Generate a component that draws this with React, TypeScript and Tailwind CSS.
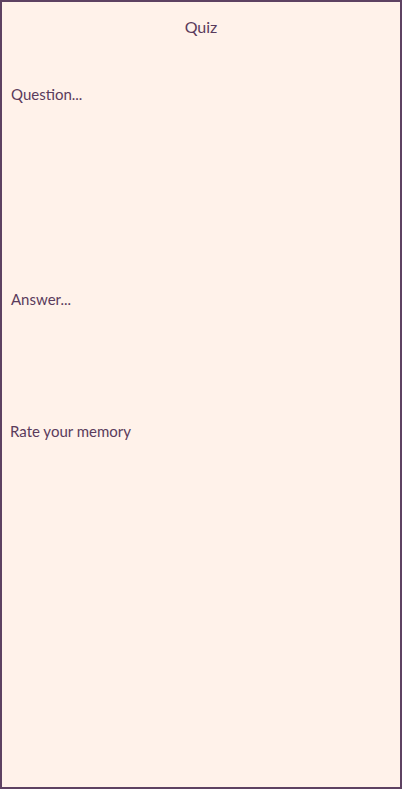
export default function App() {
  return (
    <div className="h-[789px] w-[402px] border-2 border-[#5e4262] bg-[#fff2ea] text-[#5a3b5c] font-['Lato','Open_Sans',sans-serif] flex flex-col">
      <header className="h-[50px] flex items-center justify-center">
        <h1 className="text-[16px] leading-none">Quiz</h1>
      </header>
      <section className="h-[204px] px-[9px] pt-[32px]">
        <p className="text-[15px] leading-5">Question...</p>
      </section>
      <section className="h-[132px] px-[9px] pt-[33px]">
        <p className="text-[15px] leading-5">Answer...</p>
      </section>
      <section className="flex-1 px-[8px] pt-[33px]">
        <p className="text-[15px] leading-5">Rate your memory</p>
      </section>
    </div>
  )
}
